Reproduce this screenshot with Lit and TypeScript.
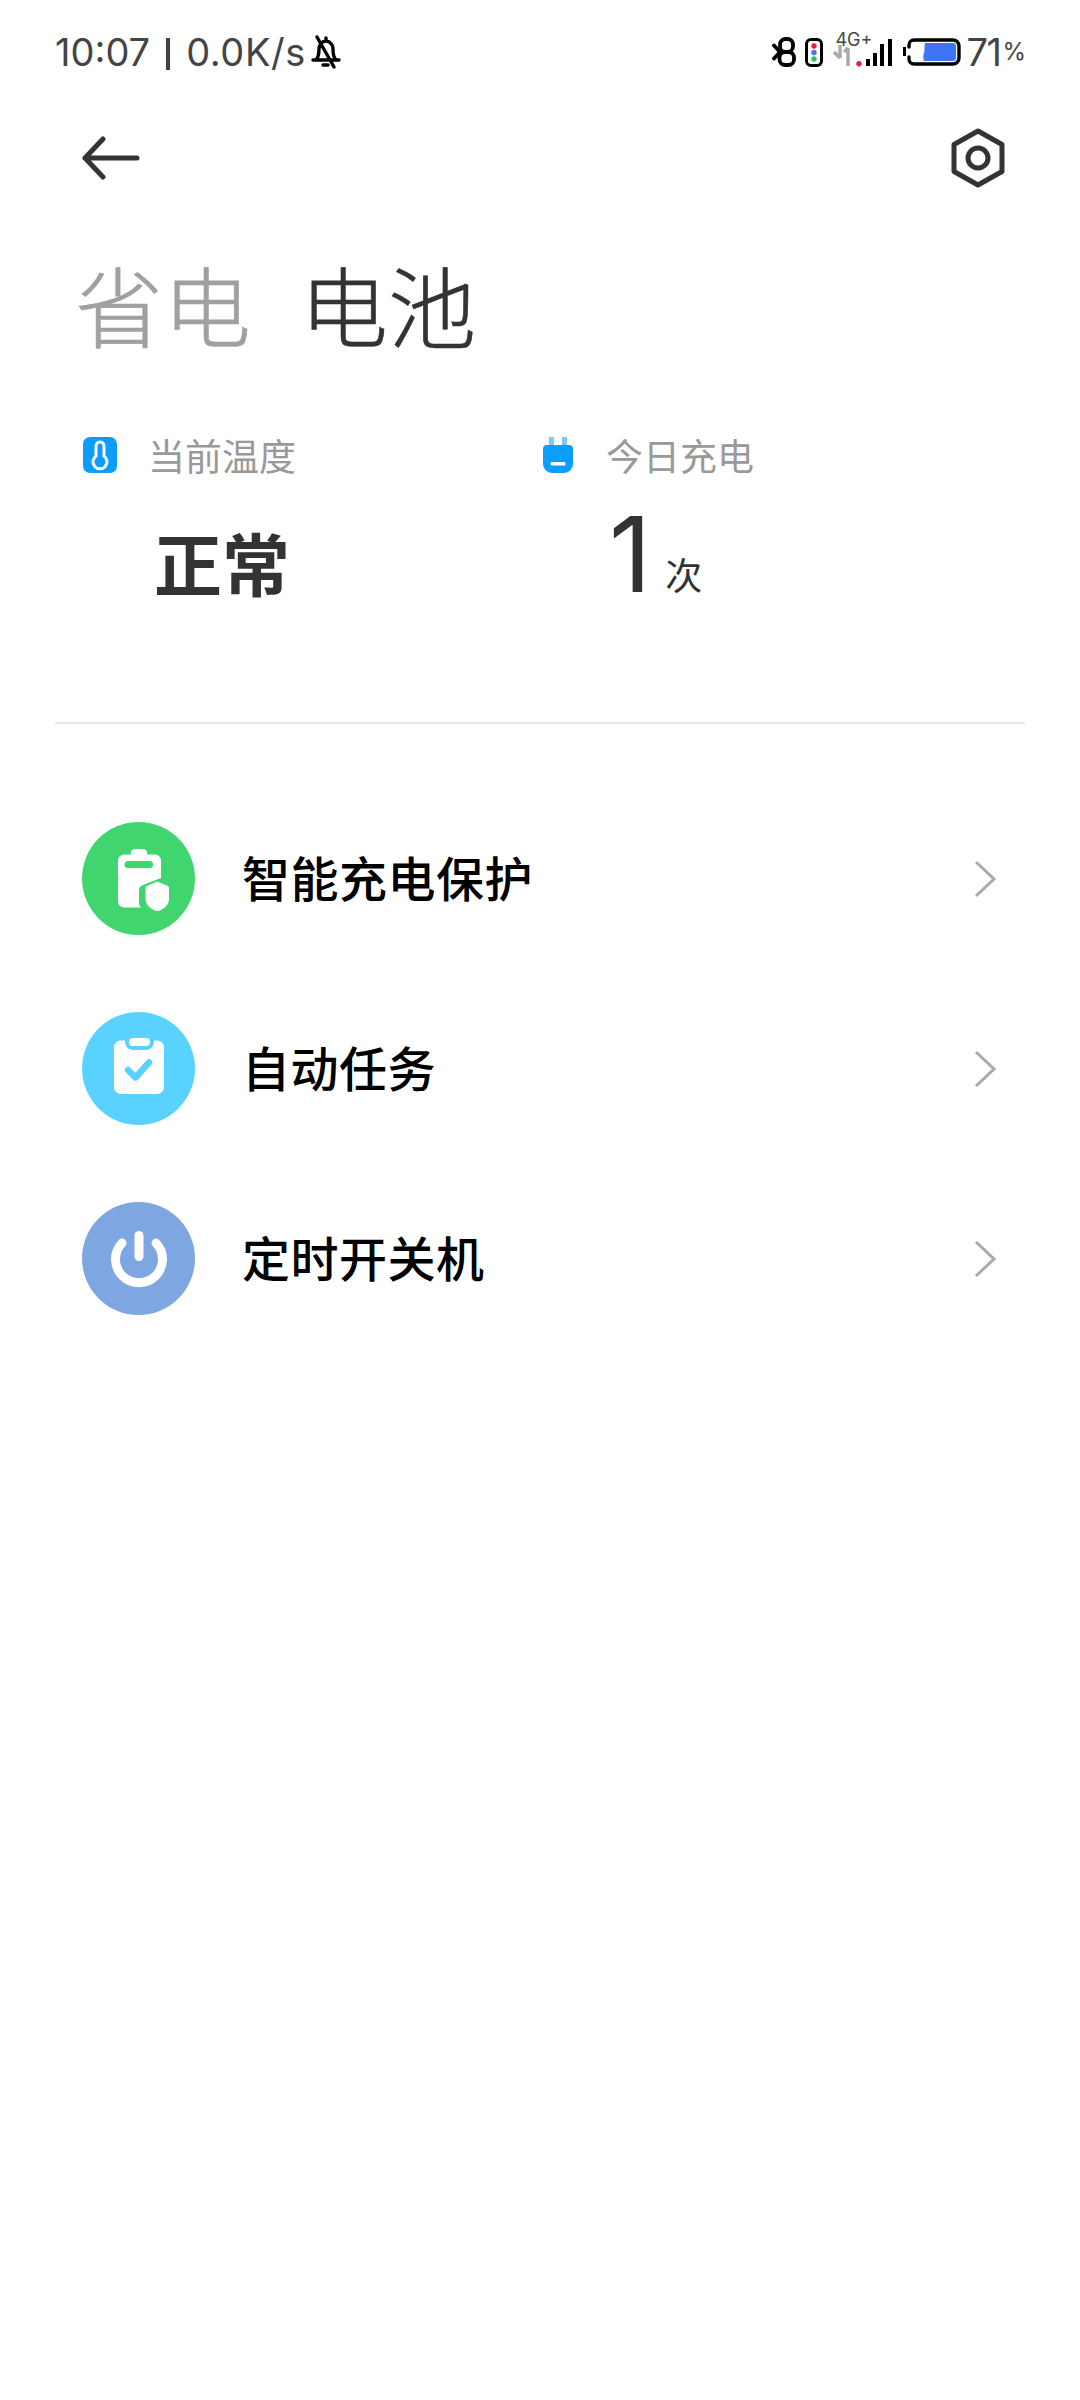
import { LitElement, html, css, svg } from 'lit';
import { customElement } from 'lit/decorators.js';

const batteryIcon = svg`
  <path fill="#fff" d="M36 10h8a4 4 0 0 1 4 5.500h8a6 6 0 0 1 6 6V39l-18 7a6 6 0 0 0-4 5v12a6 6 0 0 0 2 5.500H25a6 6 0 0 1-6-6v-41a6 6 0 0 1 6-6h7a4 4 0 0 1 4-5.500z"/>
  <rect x="25.500" y="22" width="28.500" height="7" rx="3.500" fill="#41d56f"/>
  <path fill="#fff" d="M58.300 42.500l10.500 4.500a2 2 0 0 1 1.200 2v11.500c0 5-5 9.500-10 11.300a5 5 0 0 1-3.400 0c-5-1.800-10-6.300-10-11.300V49a2 2 0 0 1 1.200-2z"/>`;

const taskIcon = svg`
  <rect x="15" y="11.500" width="50" height="53.500" rx="7" fill="#fff"/>
  <rect x="26" y="4" width="29" height="17" rx="8" fill="#5ad2ff"/>
  <rect x="30" y="9" width="21" height="8" rx="4" fill="#fff"/>
  <path d="M29 41l7.500 7.500L50 33.500" fill="none" stroke="#5ad2ff" stroke-width="6.500" stroke-linecap="round" stroke-linejoin="round"/>`;

const powerIcon = svg`
  <path d="M23 24a23.500 23.500 0 1 0 34 0" fill="none" stroke="#fff" stroke-width="9" stroke-linecap="round"/>
  <path d="M40 16.500v21" fill="none" stroke="#fff" stroke-width="9" stroke-linecap="round"/>`;

const ROWS = [
  { label: '智能充电保护', color: '#41d56f', icon: batteryIcon },
  { label: '自动任务', color: '#5ad2ff', icon: taskIcon },
  { label: '定时开关机', color: '#7ea6e0', icon: powerIcon },
];

@customElement('app-root')
export class AppRoot extends LitElement {
  static styles = css`
    :host {
      display: block;
      width: 1080px;
      height: 2400px;
      background: #fff;
      color: #333;
      font-family: "Noto Sans CJK SC", "Noto Sans", sans-serif;
      overflow: hidden;
    }

    .status {
      height: 104px;
      box-sizing: border-box;
      padding: 0 54px 0 55px;
      display: flex;
      align-items: center;
      justify-content: space-between;
      font-family: Inter, Roboto, sans-serif;
      font-size: 38px;
      color: #444;
    }
    .status-left {
      display: flex;
      align-items: center;
    }
    .sep {
      width: 4px;
      height: 32px;
      margin: 3px 16px 0 16px;
      background: #444;
    }
    .speed { letter-spacing: 0.6px; }
    .bell { margin-left: 4px; }
    .status-right {
      display: flex;
      align-items: center;
    }
    .traffic { margin-left: 9px; }
    .signal {
      position: relative;
      width: 60px;
      height: 32px;
      margin-left: 9px;
    }
    .signal svg { display: block; }
    .net {
      position: absolute;
      left: 3px;
      top: -7px;
      font-size: 18px;
      line-height: 22px;
      color: #444;
    }
    .batt { margin-left: 11px; }
    .batt-num { margin-left: 5px; letter-spacing: -1.500px; }
    .batt-pct { font-size: 24px; align-self: flex-end; margin: 0 0 9px 2px; }

    .nav {
      height: 108px;
      display: flex;
      align-items: center;
      justify-content: space-between;
      padding: 0 74px 0 82px;
    }

    .tabs {
      display: flex;
      gap: 49px;
      margin: 39px 0 0 75px;
      font-size: 88px;
      line-height: 104px;
      font-weight: 300;
      -webkit-text-stroke: 0.6px currentColor;
    }
    .tab-off { color: #a0a0a0; }

    .stats {
      display: flex;
      margin: 80px 0 0 83px;
      height: 190px;
    }
    .stat { width: 460px; }
    .stat-head {
      display: flex;
      align-items: center;
      height: 40px;
      color: #999;
      font-size: 37px;
    }
    .temp-icon { margin-right: 31px; }
    .plug-icon { margin-right: 33px; }
    .stat-value {
      font-size: 68px;
      font-weight: 700;
      line-height: 80px;
      margin: 47px 0 0 71px;
      color: #333;
    }
    .stat-count {
      display: flex;
      align-items: flex-end;
      margin: 19px 0 0 66px;
      height: 120px;
    }
    .count-num {
      font-family: Inter, Roboto, sans-serif;
      font-size: 104px;
      font-weight: 400;
      line-height: 120px;
    }
    .count-unit {
      font-size: 37px;
      line-height: 44px;
      margin: 0 0 18px 14px;
    }

    .divider {
      height: 2px;
      margin: 97px 55px 0;
      background: #e6e6e6;
    }

    .list {
      margin-top: 98px;
      display: flex;
      flex-direction: column;
      gap: 77px;
      padding: 0 82px;
    }
    .row {
      display: flex;
      align-items: center;
      height: 113px;
    }
    .badge {
      width: 113px;
      height: 113px;
      border-radius: 50%;
      display: flex;
      align-items: center;
      justify-content: center;
      flex: none;
    }
    .row-label {
      margin: 0 0 5px 47px;
      font-size: 48px;
      font-weight: 500;
      letter-spacing: 0.5px;
      color: #000;
    }
    .chev { margin-left: auto; }
  `;

  render() {
    return html`
      <div class="status">
        <div class="status-left">
          <span>10:07</span><span class="sep"></span><span class="speed">0.0K/s</span>
          <svg class="bell" width="32" height="34" viewBox="0 0 32 34" fill="none" stroke="#000" stroke-width="3.400" stroke-linecap="round">
            <path d="M3 25h26M6 25c3-3 3-7 3-11 0-4 3-8 7-8s7 4 7 8c0 4 0 8 3 11M13 30h5M16 5V3M7 2l17 30"/>
          </svg>
        </div>
        <div class="status-right">
          <svg width="24" height="30" viewBox="0 0 24 30" fill="none" stroke="#000" stroke-width="3.800" stroke-linecap="round" stroke-linejoin="round">
            <path d="M2 8.500l6 6.500-6 6.500"/>
            <rect x="8" y="2" width="13" height="13" rx="5.500"/>
            <rect x="7.500" y="15" width="14.500" height="13" rx="5.500"/>
          </svg>
          <svg class="traffic" width="18" height="29" viewBox="0 0 18 29">
            <rect x="1.500" y="1.500" width="15" height="26" rx="4.500" fill="none" stroke="#000" stroke-width="3"/>
            <circle cx="9" cy="8" r="2.700" fill="#ea1f3a"/>
            <circle cx="9" cy="14.500" r="2.700" fill="#4a74e8"/>
            <circle cx="9" cy="21" r="2.700" fill="#20c870"/>
          </svg>
          <div class="signal">
            <svg width="60" height="32" viewBox="0 0 60 32">
              <path d="M8 9v13M2 16l6 6M16 12v18M12 16l4-4" fill="none" stroke="#aaa" stroke-width="3.400"/>
              <circle cx="27" cy="27.700" r="2.700" fill="#ea1f3a"/>
              <rect x="34" y="23" width="4" height="7" fill="#000"/>
              <rect x="41" y="17" width="4" height="13" fill="#000"/>
              <rect x="48" y="8" width="4" height="22" fill="#000"/>
              <rect x="56" y="3" width="4" height="27" fill="#000"/>
            </svg>
            <span class="net">4G+</span>
          </div>
          <svg class="batt" width="58" height="30" viewBox="0 0 58 30">
            <path d="M6 10V8a5 5 0 0 1 5-5h39a6 6 0 0 1 6 6v12a6 6 0 0 1-6 6H11a5 5 0 0 1-5-5v-2" fill="none" stroke="#000" stroke-width="3.400" stroke-linecap="round"/>
            <path d="M1.500 10v9" stroke="#000" stroke-width="3"/>
            <path d="M22 6h28a3 3 0 0 1 3 3v12a3 3 0 0 1-3 3H21c-1-3-1-6 0-8 1-3 0-6 1-10z" fill="#3f75f5"/>
          </svg>
          <span class="batt-num">71</span><span class="batt-pct">%</span>
        </div>
      </div>

      <div class="nav">
        <svg width="58" height="44" viewBox="0 0 58 44" fill="none" stroke="#333" stroke-width="5" stroke-linecap="round" stroke-linejoin="round">
          <path d="M21 3L3 22l18 19M3 22h52"/>
        </svg>
        <svg width="56" height="60" viewBox="0 0 56 60" fill="none" stroke="#333" stroke-width="5" stroke-linejoin="round">
          <path d="M28 3l24 13.500v27L28 57 4 43.500v-27z"/>
          <circle cx="28" cy="30" r="10"/>
        </svg>
      </div>

      <div class="tabs">
        <span class="tab-off">省电</span>
        <span>电池</span>
      </div>

      <div class="stats">
        <div class="stat">
          <div class="stat-head">
            <svg class="temp-icon" width="34" height="36" viewBox="0 0 34 36">
              <rect width="34" height="36" rx="7" fill="#0c9dff"/>
              <path d="M13 9a4 4 0 0 1 8 0v10a7 7 0 1 1-8 0z" fill="none" stroke="#fff" stroke-width="3"/>
            </svg>
            <span>当前温度</span>
          </div>
          <div class="stat-value">正常</div>
        </div>
        <div class="stat">
          <div class="stat-head">
            <svg class="plug-icon" width="30" height="36" viewBox="0 0 30 36">
              <rect x="6" y="0" width="5" height="9" fill="#7cc8ff"/>
              <rect x="19" y="0" width="5" height="9" fill="#7cc8ff"/>
              <path d="M4 8h22a4 4 0 0 1 4 4v15a9 9 0 0 1-9 9H9a9 9 0 0 1-9-9V12a4 4 0 0 1 4-4z" fill="#0c9dff"/>
              <rect x="7.500" y="25" width="15" height="3.500" rx="1.500" fill="#fff"/>
            </svg>
            <span>今日充电</span>
          </div>
          <div class="stat-count">
            <span class="count-num">1</span>
            <span class="count-unit">次</span>
          </div>
        </div>
      </div>

      <div class="divider"></div>

      <div class="list">
        ${ROWS.map(
          (row) => html`
            <div class="row">
              <div class="badge" style="background:${row.color}">
                <svg width="80" height="80" viewBox="0 0 80 80">${row.icon}</svg>
              </div>
              <span class="row-label">${row.label}</span>
              <svg class="chev" width="26" height="38" viewBox="0 0 26 38" fill="none" stroke="#aaa" stroke-width="3">
                <path d="M4 2l18 17L4 36"/>
              </svg>
            </div>
          `
        )}
      </div>
    `;
  }
}
